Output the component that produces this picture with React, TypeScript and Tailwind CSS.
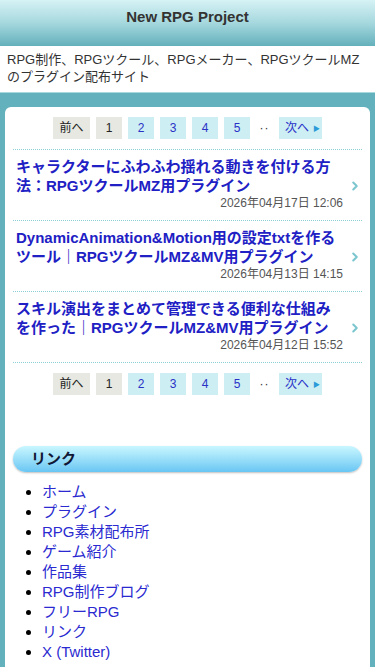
import { ChevronRight } from 'lucide-react'

const pages = ['2', '3', '4', '5']

const posts = [
  {
    title: 'キャラクターにふわふわ揺れる動きを付ける方法：RPGツクールMZ用プラグイン',
    date: '2026年04月17日 12:06',
  },
  {
    title: 'DynamicAnimation&Motion用の設定txtを作るツール｜RPGツクールMZ&MV用プラグイン',
    date: '2026年04月13日 14:15',
  },
  {
    title: 'スキル演出をまとめて管理できる便利な仕組みを作った｜RPGツクールMZ&MV用プラグイン',
    date: '2026年04月12日 15:52',
  },
]

const links = [
  'ホーム',
  'プラグイン',
  'RPG素材配布所',
  'ゲーム紹介',
  '作品集',
  'RPG制作ブログ',
  'フリーRPG',
  'リンク',
  'X (Twitter)',
]

function Pagination() {
  return (
    <div className="flex items-center justify-center gap-[6px] text-[12px] leading-none">
      <span className="h-[22px] w-[37px] flex items-center justify-center bg-[#e6e8e1] text-[#222]">
        前へ
      </span>
      <span className="h-[22px] w-[26px] flex items-center justify-center bg-[#e6e8e1] text-[#222]">
        1
      </span>
      {pages.map((p) => (
        <a
          key={p}
          className="h-[22px] w-[26px] flex items-center justify-center bg-[#cdeef3] text-[#2a32c8]"
        >
          {p}
        </a>
      ))}
      <span className="w-[17px] text-center text-[#333] tracking-[1px]">··</span>
      <a className="h-[22px] w-[43px] flex items-center justify-center gap-[4px] bg-[#cdeef3] text-[#2a32c8] pl-[4px]">
        次へ
        <span className="text-[7px] text-[#2a9ad8]">▶</span>
      </a>
    </div>
  )
}

export default function App() {
  return (
    <div className="min-h-screen bg-[#63b1bc] font-['Liberation_Sans','Noto_Sans_CJK_JP',sans-serif]">
      <header className="h-[46px] bg-gradient-to-b from-[#d6f2f5] via-[#a5d8de] to-[#63b0bb] flex justify-center pt-[6px]">
        <h1 className="text-[15px] font-bold text-[#333]">New RPG Project</h1>
      </header>
      <p className="bg-white px-[7px] pt-[5px] pb-[7px] text-[13px] leading-[17px] text-[#333] border-b border-[#a8d9de]">
        RPG制作、RPGツクール、RPGメーカー、RPGツクールMZのプラグイン配布サイト
      </p>

      <main className="mx-[5px] mt-[14px] bg-white rounded-t-[6px] px-[8px] pt-[10px] pb-[12px]">
        <Pagination />

        <div className="mt-[10px] border-t border-dotted border-[#8ccfd8]">
          {posts.map((post) => (
            <a
              key={post.date}
              className="flex items-center border-b border-dotted border-[#8ccfd8] pt-[7px] pb-[9px]"
            >
              <div className="flex-1 min-w-0 pl-[3px] pr-[5px]">
                <h2 className="text-[15px] leading-[19px] font-bold text-[#2020c4] line-clamp-2">
                  {post.title}
                </h2>
                <div className="mt-[1px] text-right text-[12px] leading-[15px] text-[#555]">
                  {post.date}
                </div>
              </div>
              <ChevronRight className="h-[14px] w-[14px] mt-[4px] shrink-0 text-[#7cc6cf]" strokeWidth={3.5} />
            </a>
          ))}
        </div>

        <div className="mt-[10px]">
          <Pagination />
        </div>

        <section className="mt-[51px]">
          <h3 className="h-[26px] rounded-full bg-gradient-to-b from-[#c9f7ff] to-[#68c6f3] shadow-[0_1px_2px_rgba(0,0,0,0.25)] flex items-center pl-[18px] text-[15px] font-bold text-[#101836]">
            リンク
          </h3>
          <ul className="mt-[10px] list-disc pl-[29px] text-[15px] leading-[20px]">
            {links.map((l) => (
              <li key={l}>
                <a className="text-[#2a2ad0]">{l}</a>
              </li>
            ))}
          </ul>
        </section>
      </main>
    </div>
  )
}
